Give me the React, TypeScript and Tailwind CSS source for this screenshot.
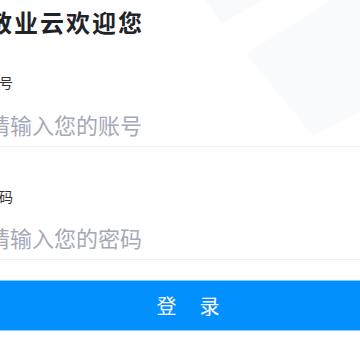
export default function App() {
  return (
    <div className="relative h-[360px] w-[360px] overflow-hidden bg-white font-['Noto_Sans_CJK_SC','Noto_Sans',sans-serif]">
      {/* faint background shapes */}
      <svg className="pointer-events-none absolute left-0 top-0" width="360" height="360" viewBox="0 0 360 360">
        <polygon points="205,0 262,0 222,24" fill="#f9fafc" />
        <polygon points="246,54 330,0 360,0 360,112 313,136" fill="#fafbfc" />
      </svg>

      <div className="relative -ml-3 flex w-[400px] flex-col">
        <h1 className="mt-[5px] text-[24px] font-bold leading-[34px] tracking-[2px] text-[#1f2329]">
          敬业云欢迎您
        </h1>

        <label className="-ml-[3px] mt-[33px] text-[14px] leading-[20px] text-[#333333]">账号</label>
        <div className="mt-[11px] flex h-[44px] items-center border-b border-[#eef0f5]">
          <input
            className="w-full bg-transparent text-[22px] text-[#333] outline-none placeholder:text-[#a4a9b8]"
            placeholder="请输入您的账号"
          />
        </div>

        <label className="-ml-[3px] mt-[39px] text-[14px] leading-[20px] text-[#333333]">密码</label>
        <div className="mt-[10px] flex h-[44px] items-center border-b border-[#eef0f5]">
          <input
            type="password"
            className="w-full bg-transparent text-[22px] text-[#333] outline-none placeholder:text-[#a4a9b8]"
            placeholder="请输入您的密码"
          />
        </div>

        <button className="mt-[20px] flex h-[51px] items-center justify-center border-y border-[#8ccaff] bg-[#0390ff] pl-[23px] text-[20px] tracking-[23px] text-white">
          登录
        </button>
      </div>
    </div>
  )
}
